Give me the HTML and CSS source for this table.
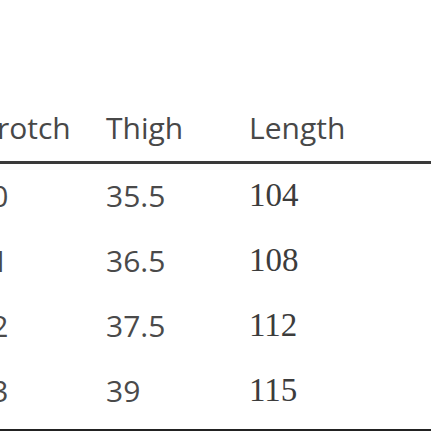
FILE: index.html
```html
<!DOCTYPE html>
<html>
<head>
<meta charset="utf-8">
<link rel="stylesheet" href="styles.css">
</head>
<body>
<div class="viewport">
  <table class="size-table">
    <thead>
      <tr>
        <th class="c-crotch">Crotch</th>
        <th class="c-thigh">Thigh</th>
        <th class="c-length">Length</th>
      </tr>
    </thead>
    <tbody>
      <tr><td class="c-crotch">30</td><td class="c-thigh">35.5</td><td class="c-length num-serif">104</td></tr>
      <tr><td class="c-crotch">31</td><td class="c-thigh">36.5</td><td class="c-length num-serif">108</td></tr>
      <tr><td class="c-crotch">32</td><td class="c-thigh">37.5</td><td class="c-length num-serif">112</td></tr>
      <tr><td class="c-crotch">33</td><td class="c-thigh">39</td><td class="c-length num-serif">115</td></tr>
    </tbody>
  </table>
</div>
</body>
</html>
```
FILE: styles.css
```css
html, body {
  margin: 0;
  padding: 0;
  background: #ffffff;
}
.viewport {
  width: 431px;
  height: 431px;
  overflow: hidden;
  padding-top: 106px;
  box-sizing: border-box;
}
.size-table {
  border-collapse: collapse;
  table-layout: fixed;
  width: 500px;
  margin-left: -28px;
  font-family: "Open Sans", "Liberation Sans", sans-serif;
  color: #4d4d4d;
}
.size-table th,
.size-table td {
  box-sizing: border-box;
}
.size-table th {
  font-weight: 400;
  text-align: left;
  font-size: 30px;
  padding: 1px 0 13px 0;
  vertical-align: middle;
  border-bottom: 3px solid #3a3a3a;
  color: #484848;
}
.size-table td {
  font-size: 30px;
  height: 65px;
  padding: 0;
  vertical-align: middle;
  color: #4a4a4a;
}
.size-table tbody tr:last-child td {
  height: 73px;
  border-bottom: 3px solid #222;
  padding-bottom: 6px;
}
.c-crotch { width: 134px; }
.c-thigh { width: 143px; }
.c-length { width: 223px; }
.size-table th.c-crotch { padding-left: 6px; }
.size-table td.c-crotch { padding-left: 2px; }
.size-table td.num-serif {
  font-family: "Liberation Serif", "Times New Roman", serif;
  font-size: 33px;
  color: #3c3c3c;
}
```
